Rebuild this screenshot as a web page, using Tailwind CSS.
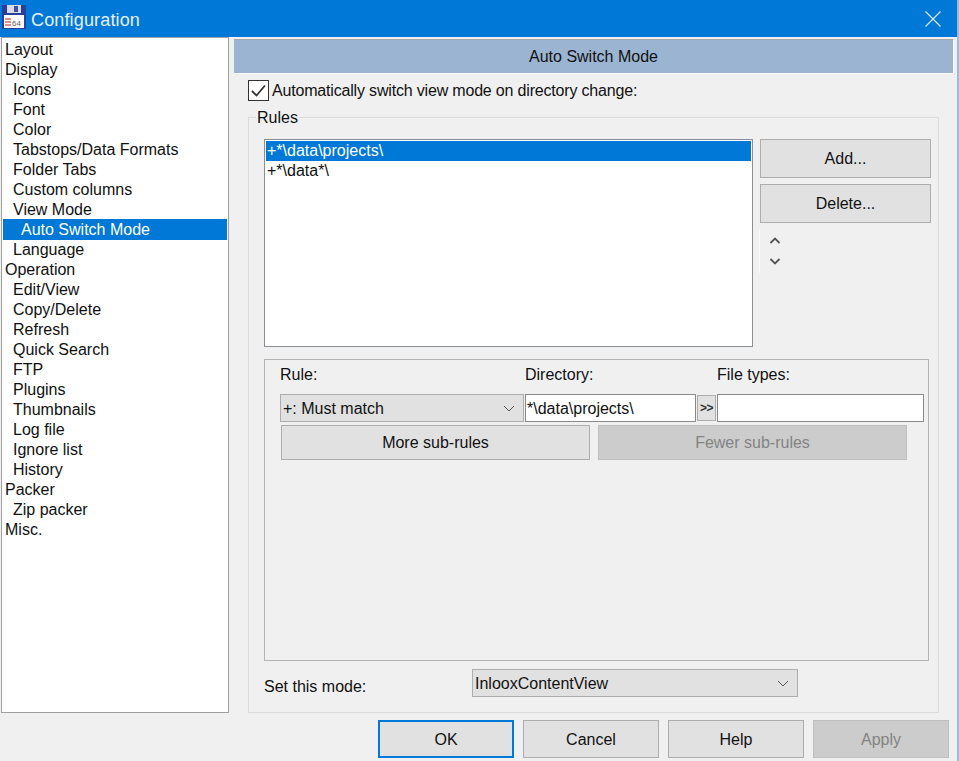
<!DOCTYPE html>
<html>

<head>
  <meta charset="UTF-8" />
  <title>Configuration</title>
  <script src="https://cdn.jsdelivr.net/npm/@tailwindcss/browser@4"></script>
</head>

<body class="bg-[#f0f0f0] font-['Liberation_Sans',Arial,sans-serif] text-[16px] text-[#111] overflow-hidden">
  <div class="relative w-[959px] h-[761px] border-r-2 border-[#8cc0ea] overflow-hidden">
    <!-- title bar -->
    <div class="h-[37px] bg-[#0078d7] flex items-center pl-[2px] pr-[16px] text-white">
      <svg width="25" height="25" viewBox="0 0 25 25" class="shrink-0 mb-[2px]">
        <rect x="0" y="0" width="24" height="24" fill="#26409c" />
        <rect x="5" y="0" width="14" height="8" fill="#d8dce8" />
        <rect x="12" y="1" width="4" height="6" fill="#3f4f9f" />
        <rect x="2" y="10" width="20" height="13" fill="#fbfbfb" />
        <path d="M3 14h6M3 17h6M3 20h6" stroke="#d02020" stroke-width="1" />
        <text x="10" y="21" font-size="8" fill="#666">64</text>
      </svg>
      <span class="ml-[4px] mt-[4px] text-[18px] text-[#e6f1fb] tracking-[0.15px]">Configuration</span>
      <svg width="16" height="16" viewBox="0 0 16 16" class="ml-auto">
        <path d="M0.5 0.5l15 15M15.5 0.5l-15 15" stroke="#dcebf8" stroke-width="1.2" fill="none" />
      </svg>
    </div>

    <div class="flex">
      <!-- tree -->
      <div class="ml-[1px] w-[228px] h-[676px] border border-[#a0a0a0] bg-white pt-[2px] leading-[20px] shrink-0">
        <div class="pl-[3px]">Layout</div>
        <div class="pl-[3px]">Display</div>
        <div class="pl-[11px]">Icons</div>
        <div class="pl-[11px]">Font</div>
        <div class="pl-[11px]">Color</div>
        <div class="pl-[11px]">Tabstops/Data Formats</div>
        <div class="pl-[11px]">Folder Tabs</div>
        <div class="pl-[11px]">Custom columns</div>
        <div class="pl-[11px]">View Mode</div>
        <div class="pl-[18px] mx-[1px] -mt-[1px] pt-[1px] bg-[#0078d7] text-white">Auto Switch Mode</div>
        <div class="pl-[11px]">Language</div>
        <div class="pl-[3px]">Operation</div>
        <div class="pl-[11px]">Edit/View</div>
        <div class="pl-[11px]">Copy/Delete</div>
        <div class="pl-[11px]">Refresh</div>
        <div class="pl-[11px]">Quick Search</div>
        <div class="pl-[11px]">FTP</div>
        <div class="pl-[11px]">Plugins</div>
        <div class="pl-[11px]">Thumbnails</div>
        <div class="pl-[11px]">Log file</div>
        <div class="pl-[11px]">Ignore list</div>
        <div class="pl-[11px]">History</div>
        <div class="pl-[3px]">Packer</div>
        <div class="pl-[11px]">Zip packer</div>
        <div class="pl-[3px]">Misc.</div>
      </div>

      <!-- right panel -->
      <div class="ml-[5px] w-[720px] shrink-0">
        <div class="mt-[2px] w-[720px] h-[35px] bg-[#9ab4d2] border-t border-t-[#a8a8a8] border-r border-r-white border-b border-b-white flex items-center justify-center">Auto Switch Mode</div>

        <div class="ml-[14px] mt-[6px] h-[21px] flex items-center">
          <svg width="21" height="21" viewBox="0 0 21 21" class="shrink-0">
            <rect x="0.5" y="0.5" width="20" height="20" fill="#fff" stroke="#333" />
            <path d="M4 11l4.5 4.5L17 5.5" stroke="#333" stroke-width="1.8" fill="none" />
          </svg>
          <span class="ml-[3px] tracking-[-0.18px]">Automatically switch view mode on directory change:</span>
        </div>

        <!-- Rules group -->
        <div class="relative ml-[14px] mt-[16px] w-[691px] h-[596px] border border-[#dcdcdc] pl-[15px] pt-[21px]">
          <span class="absolute left-[7px] top-[-9px] bg-[#f0f0f0] px-[1px] leading-[18px]">Rules</span>

          <div class="flex">
            <div class="w-[489px] h-[208px] border border-[#8a8f96] bg-white p-[1px] leading-[20px]">
              <div class="bg-[#0078d7] text-white pl-[1px]">+*\data\projects\</div>
              <div class="pl-[1px]">+*\data*\</div>
            </div>
            <div class="ml-[7px] w-[171px]">
              <div class="h-[39px] bg-[#e1e1e1] border border-[#adadad] flex items-center justify-center">Add...</div>
              <div class="mt-[6px] h-[39px] bg-[#e1e1e1] border border-[#adadad] flex items-center justify-center">Delete...</div>
              <div class="mt-[6px] -ml-[1px] w-[30px] h-[44px] border-l border-[#fafafa] flex flex-col items-center justify-center gap-[14px]">
                <svg width="12" height="7" viewBox="0 0 12 7"><path d="M1.5 6L6 1.5 10.5 6" stroke="#555" stroke-width="1.8" fill="none" /></svg>
                <svg width="12" height="7" viewBox="0 0 12 7"><path d="M1.5 1L6 5.5 10.5 1" stroke="#555" stroke-width="1.8" fill="none" /></svg>
              </div>
            </div>
          </div>

          <!-- sub rule panel -->
          <div class="mt-[12px] w-[665px] h-[302px] border border-[#b4b4b4] pl-[15px]">
            <div class="flex h-[28px] pt-[2px] items-center leading-[20px]">
              <span class="w-[245px]">Rule:</span>
              <span class="w-[192px]">Directory:</span>
              <span>File types:</span>
            </div>
            <div class="mt-[6px] flex">
              <div class="w-[244px] h-[28px] pt-[1px] bg-[#e1e1e1] border border-[#adadad] flex items-center pl-[2px] pr-[8px]">
                <span>+: Must match</span>
                <svg width="12" height="7" viewBox="0 0 12 7" class="ml-auto"><path d="M1 1l5 5 5-5" stroke="#555" stroke-width="1" fill="none" /></svg>
              </div>
              <div class="ml-[1px] w-[171px] h-[28px] pt-[1px] bg-white border border-[#8a8a8a] flex items-center pl-[1px]">*\data\projects\</div>
              <div class="ml-[1px] mt-[1px] w-[19px] h-[26px] bg-[#e1e1e1] border border-[#adadad] flex items-center justify-center text-[12px] font-bold tracking-[-0.5px] text-[#333]">&gt;&gt;</div>
              <div class="ml-[1px] w-[207px] h-[28px] bg-white border border-[#8a8a8a]"></div>
            </div>
            <div class="mt-[3px] flex ml-[1px]">
              <div class="w-[309px] h-[35px] bg-[#e1e1e1] border border-[#adadad] flex items-center justify-center">More sub-rules</div>
              <div class="ml-[8px] w-[309px] h-[35px] bg-[#cccccc] border border-[#bfbfbf] flex items-center justify-center text-[#838383]">Fewer sub-rules</div>
            </div>
          </div>

          <div class="mt-[8px] flex">
            <span class="mt-[8px] w-[208px] leading-[20px]">Set this mode:</span>
            <div class="w-[326px] h-[28px] pt-[1px] bg-[#e1e1e1] border border-[#adadad] flex items-center pl-[2px] pr-[8px]">
              <span>InlooxContentView</span>
              <svg width="12" height="7" viewBox="0 0 12 7" class="ml-auto"><path d="M1 1l5 5 5-5" stroke="#555" stroke-width="1" fill="none" /></svg>
            </div>
          </div>
        </div>
      </div>
    </div>

    <!-- dialog buttons -->
    <div class="mt-[7px] ml-[378px] flex gap-[9px]">
      <div class="w-[136px] h-[38px] pt-[1px] bg-[#e1e1e1] border-2 border-[#0078d7] flex items-center justify-center">OK</div>
      <div class="w-[136px] h-[38px] pt-[1px] bg-[#e1e1e1] border border-[#adadad] flex items-center justify-center">Cancel</div>
      <div class="w-[136px] h-[38px] pt-[1px] bg-[#e1e1e1] border border-[#adadad] flex items-center justify-center">Help</div>
      <div class="w-[136px] h-[38px] pt-[1px] bg-[#cccccc] border border-[#bfbfbf] flex items-center justify-center text-[#838383]">Apply</div>
    </div>
  </div>
</body>

</html>
